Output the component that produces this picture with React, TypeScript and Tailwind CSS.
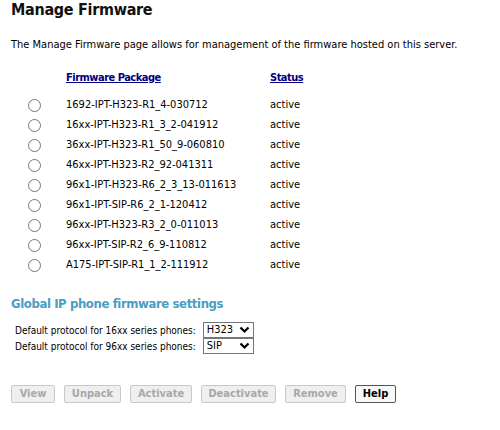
import React, { useState } from 'react';

const packages = [
  '1692-IPT-H323-R1_4-030712',
  '16xx-IPT-H323-R1_3_2-041912',
  '36xx-IPT-H323-R1_50_9-060810',
  '46xx-IPT-H323-R2_92-041311',
  '96x1-IPT-H323-R6_2_3_13-011613',
  '96x1-IPT-SIP-R6_2_1-120412',
  '96xx-IPT-H323-R3_2_0-011013',
  '96xx-IPT-SIP-R2_6_9-110812',
  'A175-IPT-SIP-R1_1_2-111912',
];

const actions = [
  { label: 'View', w: 'w-[44px]' },
  { label: 'Unpack', w: 'w-[57px]' },
  { label: 'Activate', w: 'w-[62px]' },
  { label: 'Deactivate', w: 'w-[75px]' },
  { label: 'Remove', w: 'w-[61px]' },
];

function Chevron() {
  return (
    <svg width="11" height="8" viewBox="0 0 11 8" className="pointer-events-none absolute right-[4px] top-[4px]">
      <path d="M1.5 1.5 L5.5 5.5 L9.5 1.5" fill="none" stroke="#000" strokeWidth="2.2" />
    </svg>
  );
}

function ProtocolSelect({ value, options }: { value: string; options: string[] }) {
  const [v, setV] = useState(value);
  return (
    <div className="relative inline-block">
      <select
        value={v}
        onChange={(e) => setV(e.target.value)}
        className="appearance-none block w-[51px] h-[16px] border border-[#767676] bg-white pl-[3px] text-[11px] leading-[14px] text-black outline-none"
      >
        {options.map((o) => (
          <option key={o}>{o}</option>
        ))}
      </select>
      <Chevron />
    </div>
  );
}

export default function App() {
  const [selected, setSelected] = useState<number | null>(null);

  return (
    <div className="w-[500px] h-[430px] bg-white text-black px-[11px] font-['DejaVu_Sans_Condensed','DejaVu_Sans',sans-serif] text-[11px]">
      <h1 className="pt-[1px] text-[16px] leading-[18px] font-bold text-[#111] tracking-[-0.3px]">Manage Firmware</h1>

      <p className="mt-[19px] leading-[14px]">
        The Manage Firmware page allows for management of the firmware hosted on this server.
      </p>

      {/* Liste des paquets */}
      <table className="mt-[16px] border-collapse">
        <thead>
          <tr className="h-[20px]">
            <th className="w-[55px]"></th>
            <th className="w-[204px] text-left font-bold">
              <span className="underline text-[#000080] tracking-[-0.5px]">Firmware Package</span>
            </th>
            <th className="text-left font-bold">
              <span className="underline text-[#000080] tracking-[-0.5px]">Status</span>
            </th>
          </tr>
          <tr className="h-[7px]"><td colSpan={3}></td></tr>
        </thead>
        <tbody>
          {packages.map((p, i) => (
            <tr key={p} className="h-[20px]" onClick={() => setSelected(i)}>
              <td className="pl-[17px]">
                <span
                  className={`block w-[13px] h-[13px] rounded-full border border-[#767676] bg-white ${
                    selected === i ? 'shadow-[inset_0_0_0_3px_white] bg-[#0075ff]' : ''
                  }`}
                ></span>
              </td>
              <td>{p}</td>
              <td>active</td>
            </tr>
          ))}
        </tbody>
      </table>

      <h2 className="mt-[21px] text-[13px] leading-[16px] font-bold text-[#4a9dc3] tracking-[-0.4px]">Global IP phone firmware settings</h2>

      <div className="mt-[10px] pl-[4px] w-fit text-[10px]">
        <div className="flex items-center justify-between gap-[7px] h-[16px]">
          <span className="whitespace-nowrap">Default protocol for 16xx series phones:</span>
          <ProtocolSelect value="H323" options={['H323', 'SIP']} />
        </div>
        <div className="flex items-center justify-between gap-[7px] h-[16px]">
          <span className="whitespace-nowrap">Default protocol for 96xx series phones:</span>
          <ProtocolSelect value="SIP" options={['H323', 'SIP']} />
        </div>
      </div>

      {/* Boutons d'action */}
      <div className="mt-[31px] flex gap-[9px]">
        {actions.map((b) => (
          <button
            key={b.label}
            disabled
            className={`${b.w} h-[18px] rounded-[2px] border border-[#c8c8c8] bg-[#efefef] text-[#a8a8a8] font-bold text-[11px] leading-[14px]`}
          >
            {b.label}
          </button>
        ))}
        <button className="w-[41px] h-[18px] rounded-[2px] border border-[#555] bg-[#f8f8f8] text-black font-bold text-[11px] leading-[14px]">
          Help
        </button>
      </div>
    </div>
  );
}
